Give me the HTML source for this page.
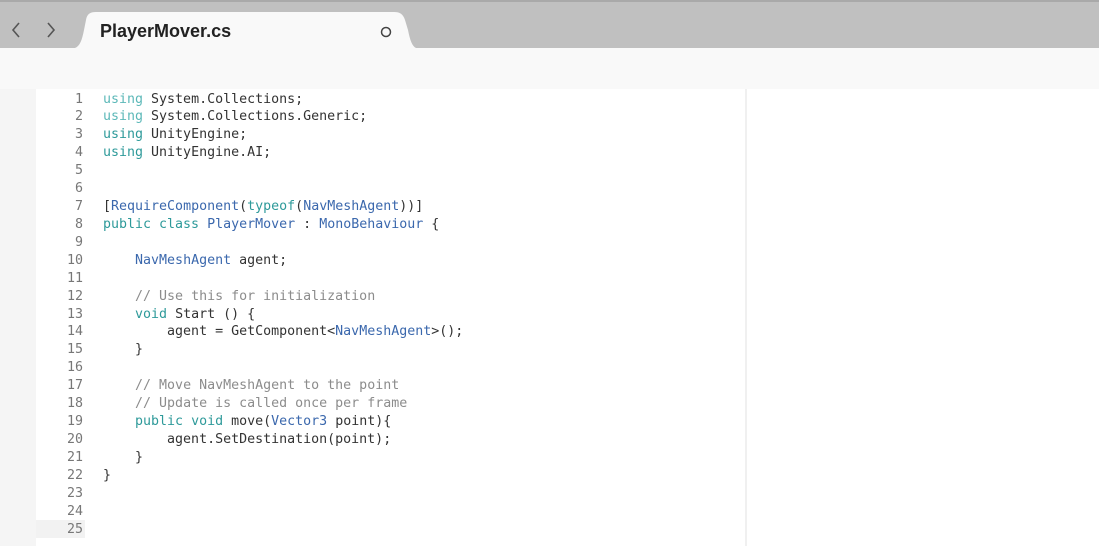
<!DOCTYPE html>
<html><head><style>
body{margin:0;width:1099px;height:546px;overflow:hidden;background:#fff;font-family:"Liberation Sans",sans-serif;position:relative}
.top{position:absolute;left:0;top:0;width:1099px;height:48px;background:#c0c0c0;border-top:2px solid #a9a9a9;box-sizing:border-box}
.bar{position:absolute;left:0;top:48px;width:1099px;height:41px;background:#f9f9f9}
.gut{position:absolute;left:0;top:89px;width:36px;height:457px;background:#f5f5f5}
.vl{position:absolute;left:745px;top:89px;width:2px;height:457px;background:#f0f0f0}
.hl{position:absolute;left:36px;top:520px;width:49px;height:18px;background:#f2f2f2}
.code{position:absolute;left:36px;top:90.5px;font-family:"DejaVu Sans Mono","Liberation Mono",monospace;font-size:13.3px;line-height:17.92px;color:#333;white-space:pre}
.ln{display:inline-block;width:47px;text-align:right;color:#777;padding-right:20px}
.k{color:#2e9a9a}.u{color:#5cb8b8}.t{color:#3b68ad}.c{color:#8c8c8c}
</style></head><body>
<div class="top"></div>
<svg style="position:absolute;left:0;top:0" width="1099" height="50">
<path d="M19 23 L13 30 L19 37" fill="none" stroke="#555" stroke-width="1.6"/>
<path d="M48 23 L54 30 L48 37" fill="none" stroke="#555" stroke-width="1.6"/>
<path d="M75 48 C80 46 82 40 84 30 L86 20 C87 14 90 12 96 12 L394 12 C400 12 403 14 405 20 L408 30 C410 40 412 46 416 48 Z" fill="#f9f9f9"/>
<circle cx="386" cy="32" r="4.5" fill="none" stroke="#444" stroke-width="1.5"/>
</svg>
<div style="position:absolute;left:100px;top:21px;font-size:18px;font-weight:bold;color:#222">PlayerMover.cs</div>
<div class="bar"></div>
<div class="gut"></div>
<div class="vl"></div>
<div class="hl"></div>
<div class="code"><span class="ln">1</span><span class="u">using</span> System.Collections;
<span class="ln">2</span><span class="u">using</span> System.Collections.Generic;
<span class="ln">3</span><span class="k">using</span> UnityEngine;
<span class="ln">4</span><span class="k">using</span> UnityEngine.AI;
<span class="ln">5</span>
<span class="ln">6</span>
<span class="ln">7</span>[<span class="t">RequireComponent</span>(<span class="k">typeof</span>(<span class="t">NavMeshAgent</span>))]
<span class="ln">8</span><span class="k">public class</span> <span class="t">PlayerMover</span> : <span class="t">MonoBehaviour</span> {
<span class="ln">9</span>
<span class="ln">10</span>    <span class="t">NavMeshAgent</span> agent;
<span class="ln">11</span>
<span class="ln">12</span>    <span class="c">// Use this for initialization</span>
<span class="ln">13</span>    <span class="k">void</span> Start () {
<span class="ln">14</span>        agent = GetComponent&lt;<span class="t">NavMeshAgent</span>&gt;();
<span class="ln">15</span>    }
<span class="ln">16</span>
<span class="ln">17</span>    <span class="c">// Move NavMeshAgent to the point</span>
<span class="ln">18</span>    <span class="c">// Update is called once per frame</span>
<span class="ln">19</span>    <span class="k">public void</span> move(<span class="t">Vector3</span> point){
<span class="ln">20</span>        agent.SetDestination(point);
<span class="ln">21</span>    }
<span class="ln">22</span>}
<span class="ln">23</span>
<span class="ln">24</span>
<span class="ln">25</span></div>
</body></html>
